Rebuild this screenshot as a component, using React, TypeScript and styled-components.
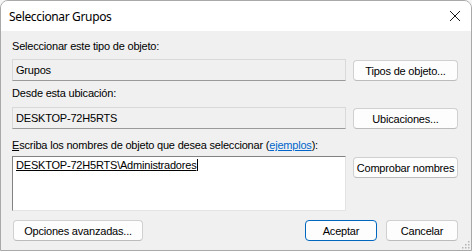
import React from "react";
import styled, { createGlobalStyle } from "styled-components";

const Global = createGlobalStyle`
  html, body { margin: 0; padding: 0; background: #f6f6f6; }
  body { width: 472px; height: 251px; overflow: hidden; }
  * { box-sizing: border-box; }
`;

const Window = styled.div`
  width: 472px;
  height: 251px;
  display: flex;
  flex-direction: column;
  background: #f0f0f0;
  border: 1px solid #a9a9a9;
  border-radius: 8px 8px 0 0;
  overflow: hidden;
  position: relative;
  font-family: "Liberation Sans", Arial, sans-serif;
  font-size: 11px;
  letter-spacing: -0.2px;
  color: #000;
`;

const TitleBar = styled.div`
  height: 30px;
  flex: none;
  background: #ffffff;
  display: flex;
  align-items: center;
  justify-content: space-between;
  padding: 0 9px 0 8px;
`;

const Title = styled.span`
  font-family: "Noto Sans", "Open Sans", sans-serif;
  font-size: 12px;
  letter-spacing: -0.35px;
  color: #000;
`;

const CloseIcon = styled.svg`
  width: 12px;
  height: 12px;
  margin-right: 1px;
`;

const Body = styled.div`
  flex: 1;
  display: grid;
  grid-template-columns: 334px 105px;
  column-gap: 7px;
  padding: 9px 0 0 11px;
  align-content: start;
`;

const Label = styled.div<{ $top?: number; $bottom?: number }>`
  grid-column: 1 / 3;
  height: 13px;
  line-height: 13px;
  white-space: nowrap;
  margin-top: ${(p) => p.$top ?? 0}px;
  margin-bottom: ${(p) => p.$bottom ?? 6}px;
`;

const Field = styled.div`
  height: 22px;
  background: #f0f0f0;
  border: 1px solid #d9d9d9;
  border-bottom-color: #9a9a9a;
  display: flex;
  align-items: center;
  padding-left: 3px;
`;

const Button = styled.button<{ $primary?: boolean; $width?: number }>`
  height: 21px;
  width: ${(p) => (p.$width ? `${p.$width}px` : "105px")};
  background: #fdfdfd;
  border: 1px solid ${(p) => (p.$primary ? "#0067c0" : "#d0d0d0")};
  border-bottom-color: ${(p) => (p.$primary ? "#0067c0" : "#bcbcbc")};
  border-radius: 4px;
  font-family: "Liberation Sans", Arial, sans-serif;
  font-size: 11px;
  letter-spacing: -0.2px;
  color: #000;
  padding: 0;
  display: flex;
  align-items: center;
  justify-content: center;
  margin-top: 1px;
`;

const TextBox = styled.div`
  height: 55px;
  background: #ffffff;
  border: 1px solid #828282;
  border-right-color: #e3e3e3;
  border-bottom-color: #e3e3e3;
  padding: 2px 3px;
`;

const Entry = styled.span`
  text-decoration: underline;
  line-height: 13px;
  border-right: 1px solid #000;
  padding-right: 1px;
`;

const Link = styled.span`
  color: #0066cc;
  text-decoration: underline;
`;

const AccessKey = styled.span`
  text-decoration: underline;
`;

const Footer = styled.div`
  grid-column: 1 / 3;
  display: flex;
  align-items: center;
  margin-top: 8px;
  padding-left: 1px;
`;

const Spacer = styled.div`
  flex: 1;
`;

const ButtonGroup = styled.div`
  display: flex;
  gap: 9px;
`;

const Grip = styled.svg`
  position: absolute;
  right: 1px;
  bottom: 1px;
  width: 10px;
  height: 10px;
`;

export default function App() {
  return (
    <>
      <Global />
      <Window>
        <TitleBar>
          <Title>Seleccionar Grupos</Title>
          <CloseIcon viewBox="0 0 12 12">
            <path d="M1 1 L11 11 M11 1 L1 11" stroke="#1a1a1a" strokeWidth="1" />
          </CloseIcon>
        </TitleBar>
        <Body>
          <Label>Seleccionar este tipo de objeto:</Label>
          <Field>Grupos</Field>
          <Button>Tipos de objeto...</Button>

          <Label $top={6} $bottom={7}>Desde esta ubicación:</Label>
          <Field>DESKTOP-72H5RTS</Field>
          <Button>Ubicaciones...</Button>

          <Label $top={10} $bottom={4}>
            <AccessKey>E</AccessKey>scriba los nombres de objeto que desea seleccionar (<Link>ejemplos</Link>):
          </Label>
          <TextBox>
            <Entry>DESKTOP-72H5RTS\Administradores</Entry>
          </TextBox>
          <div>
            <Button>Comprobar nombres</Button>
          </div>

          <Footer>
            <Button $width={130}>Opciones avanzadas...</Button>
            <Spacer />
            <ButtonGroup>
              <Button $primary $width={72}>Aceptar</Button>
              <Button $width={72}>Cancelar</Button>
            </ButtonGroup>
          </Footer>
        </Body>
        <Grip viewBox="0 0 10 10">
          {[
            [8, 0], [8, 3], [8, 6], [5, 3], [5, 6], [2, 6],
          ].map(([x, y], i) => (
            <rect key={i} x={x} y={y + 2} width="1.5" height="1.5" fill="#b5b5b5" />
          ))}
        </Grip>
      </Window>
    </>
  );
}
